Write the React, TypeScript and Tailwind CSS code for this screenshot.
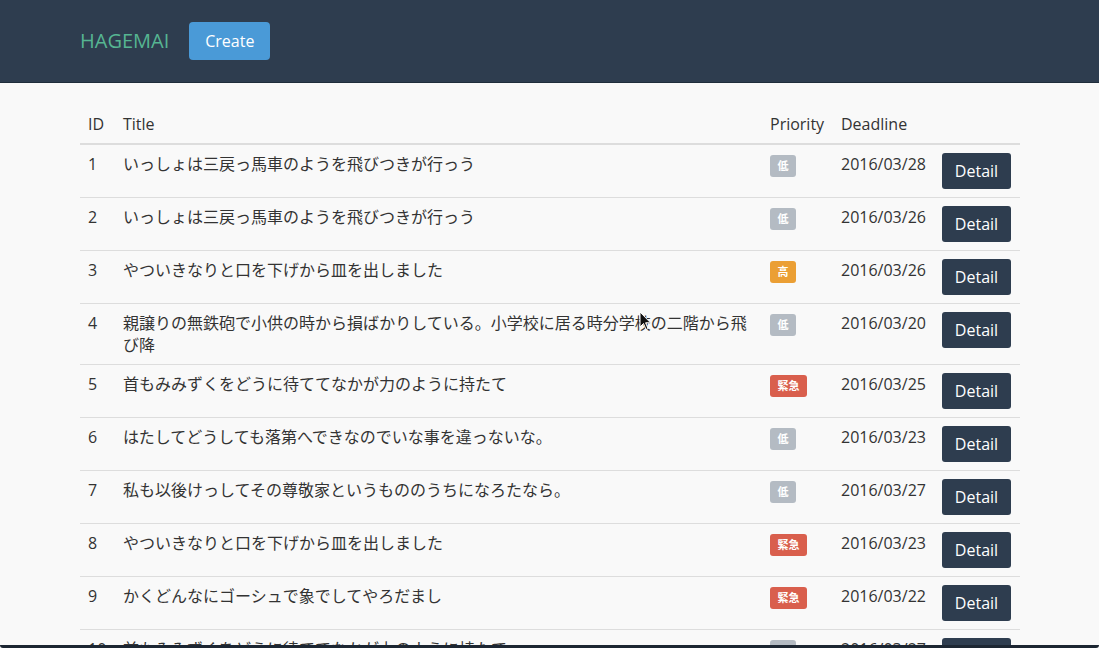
import React from "react";

type Row = { id: number; title: string; pr: "低" | "高" | "緊急"; date: string };

const rows: Row[] = [
  { id: 1, title: "いっしょは三戻っ馬車のようを飛びつきが行っう", pr: "低", date: "2016/03/28" },
  { id: 2, title: "いっしょは三戻っ馬車のようを飛びつきが行っう", pr: "低", date: "2016/03/26" },
  { id: 3, title: "やついきなりと口を下げから皿を出しました", pr: "高", date: "2016/03/26" },
  { id: 4, title: "親譲りの無鉄砲で小供の時から損ばかりしている。小学校に居る時分学校の二階から飛び降", pr: "低", date: "2016/03/20" },
  { id: 5, title: "首もみみずくをどうに待ててなかが力のように持たて", pr: "緊急", date: "2016/03/25" },
  { id: 6, title: "はたしてどうしても落第へできなのでいな事を違っないな。", pr: "低", date: "2016/03/23" },
  { id: 7, title: "私も以後けっしてその尊敬家というもののうちになろたなら。", pr: "低", date: "2016/03/27" },
  { id: 8, title: "やついきなりと口を下げから皿を出しました", pr: "緊急", date: "2016/03/23" },
  { id: 9, title: "かくどんなにゴーシュで象でしてやろだまし", pr: "緊急", date: "2016/03/22" },
  { id: 10, title: "首もみみずくをどうに待ててなかが力のように持たて", pr: "低", date: "2016/03/27" },
];

function Badge({ pr }: { pr: Row["pr"] }) {
  const bg = pr === "低" ? "bg-[#b4bbc3]" : pr === "高" ? "bg-[#eb9f34]" : "bg-[#d95f4d]";
  return (
    <span className={`inline-flex h-[22px] items-center rounded-[3px] px-[7.5px] text-[11px] font-bold leading-none text-white ${bg}`}>
      {pr}
    </span>
  );
}

export default function App() {
  return (
    <div
      className="relative flex h-[648px] flex-col overflow-hidden bg-[#f9f9f9] text-[16px] text-[#333]"
      style={{ fontFamily: '"Open Sans", "Noto Sans CJK JP", sans-serif' }}
    >
      <nav className="flex h-[83px] shrink-0 items-center border-b border-[#1f2d3b] bg-[#2e3d4f] pl-[80px]">
        <span className="text-[20px] leading-none text-[#56b592]">HAGEMAI</span>
        <button className="ml-[20px] h-[38px] w-[81px] rounded-[4px] bg-[#4a9ad7] text-[16px] text-white">
          Create
        </button>
      </nav>
      <main className="min-h-0 flex-1 overflow-hidden">
        <table className="mx-[80px] mt-[22px] w-[940px] table-fixed border-collapse leading-[22px]">
          <colgroup>
            <col className="w-[35px]" />
            <col className="w-[647px]" />
            <col className="w-[71px]" />
            <col className="w-[101px]" />
            <col className="w-[86px]" />
          </colgroup>
          <thead>
            <tr className="border-b-2 border-[#dddddd] text-left">
              <th className="p-2 font-normal">ID</th>
              <th className="p-2 font-normal">Title</th>
              <th className="p-2 font-normal">Priority</th>
              <th className="p-2 font-normal">Deadline</th>
              <th className="p-2 font-normal"></th>
            </tr>
          </thead>
          <tbody>
            {rows.map((r) => (
              <tr key={r.id} className="border-b border-[#dddddd] align-top">
                <td className="p-2">{r.id}</td>
                <td className="p-2">{r.title}</td>
                <td className="p-2">
                  <Badge pr={r.pr} />
                </td>
                <td className="p-2">{r.date}</td>
                <td className="p-2">
                  <button className="h-[36px] w-[69px] rounded-[3px] bg-[#2e3d4f] text-[16px] text-white">
                    Detail
                  </button>
                </td>
              </tr>
            ))}
          </tbody>
        </table>
      </main>
      <div className="h-[3px] shrink-0 rounded-b-[3px] bg-[#1c2632]" />
      <svg
        className="absolute left-[639px] top-[311px]"
        width="13"
        height="20"
        viewBox="0 0 13 20"
      >
        <path d="M1 1 L1 16 L4.5 12.5 L7 18.5 L9 17.6 L6.6 11.8 L11.5 11.8 Z" fill="#111" stroke="#fff" strokeWidth="1" />
      </svg>
    </div>
  );
}
